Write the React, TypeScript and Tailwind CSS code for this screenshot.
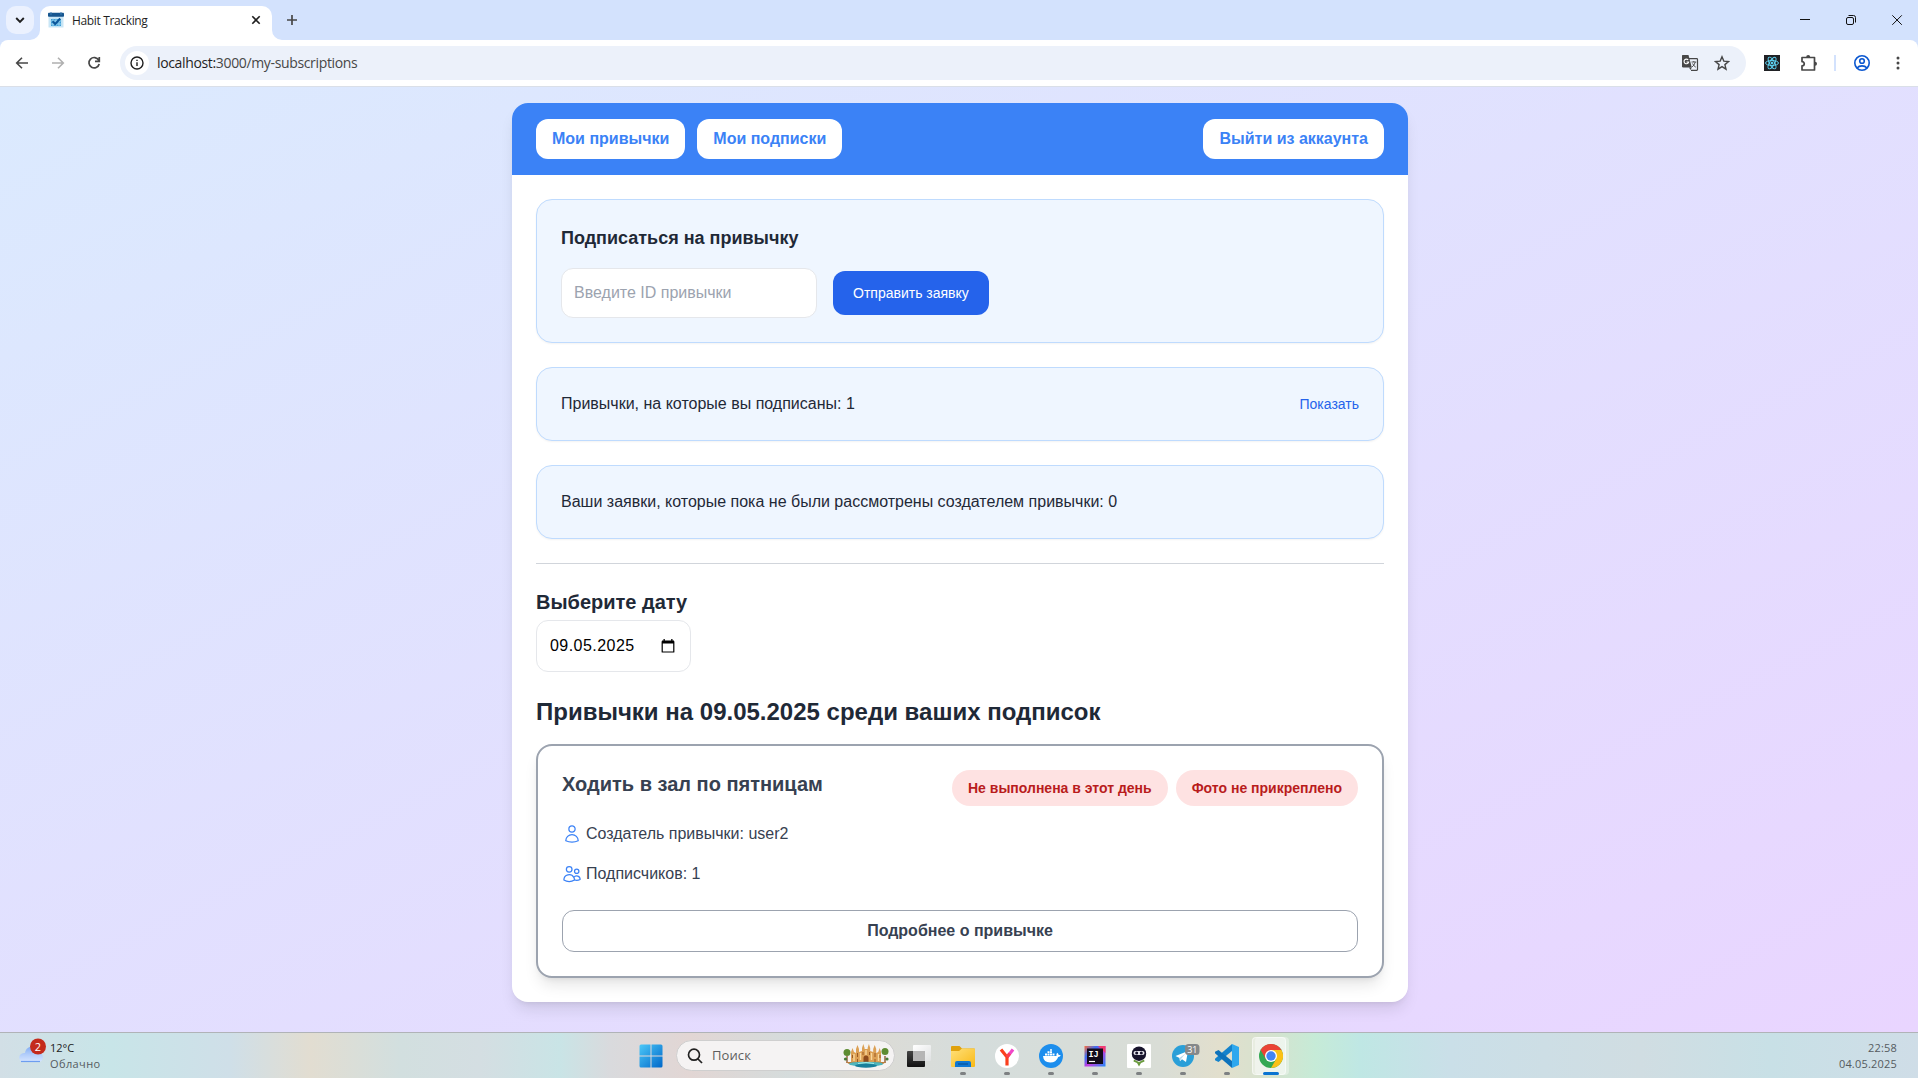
import React from "react";
import { HiOutlineUser, HiOutlineUsers } from "react-icons/hi2";

const UI = "font-['Open_Sans',sans-serif]";

function Favicon() {
  return (
    <svg width="16" height="16" viewBox="0 0 16 16" className="shrink-0">
      <rect x=".5" y="2" width="15" height="13.500" rx=".5" fill="#c9e6f6" />
      <path d="M3 7h10v7H3z" fill="#3f9fd8" />
      <path d="M5 6v9M8 6v9M11 6v9M2 9h12M2 12h12" stroke="#a9daf3" strokeWidth=".8" />
      <rect x="0" y=".8" width="16" height="4" rx=".8" fill="#17568f" />
      <path d="M3 0v3M13 0v3" stroke="#3d7cb4" strokeWidth="1" />
      <path d="M4.500 9.200l2.700 2.800 5-5.500" fill="none" stroke="#0b569a" strokeWidth="2" />
    </svg>
  );
}

function BrowserTabs() {
  return (
    <div className="flex h-10 items-end bg-[#d3e2fd]">
      <div className="flex h-10 w-10 items-center pl-[6px]">
        <div className="flex h-7 w-7 items-center justify-center rounded-[10px] bg-[#ebf1fe]">
          <svg width="10" height="8" viewBox="0 0 10 8" fill="none" stroke="#1f1f1f" strokeWidth="1.9"><path d="M1.2 2L5 5.8 8.8 2" /></svg>
        </div>
      </div>
      <div className="relative flex h-[34px] w-[232px] items-center rounded-t-[10px] bg-white px-2 pb-[6px]">
        <svg className="absolute bottom-0 -left-[10px]" width="10" height="10"><path d="M10 0v10H0A10 10 0 0 0 10 0z" fill="#fff" /></svg>
        <svg className="absolute -right-[10px] bottom-0" width="10" height="10"><path d="M0 0v10h10A10 10 0 0 1 0 0z" fill="#fff" /></svg>
        <Favicon />
        <span className="mt-px ml-2 flex-1 text-[12px] leading-4 tracking-[-0.35px] text-[#1f1f1f]">Habit Tracking</span>
        <svg width="16" height="16" viewBox="0 0 16 16" stroke="#1f1f1f" strokeWidth="1.6"><path d="M4.300 4.300l7.400 7.400M11.700 4.300l-7.400 7.400" /></svg>
      </div>
      <div className="flex h-10 flex-1 items-center pl-3">
        <svg width="16" height="16" viewBox="0 0 16 16" stroke="#474747" strokeWidth="1.700"><path d="M8 3v10M3 8h10" /></svg>
      </div>
      <div className="flex h-10 items-center">
        <svg width="46" height="40" viewBox="0 0 46 40"><path d="M17 19.500h10" stroke="#111" /></svg>
        <svg width="46" height="40" viewBox="0 0 46 40" fill="none" stroke="#111"><rect x="17.500" y="17.500" width="7" height="7" rx="1.500" /><path d="M19.500 15.500h5a2 2 0 0 1 2 2v5" /></svg>
        <svg width="43" height="40" viewBox="0 0 43 40" stroke="#111"><path d="M17.300 15.300l9.500 9.500M26.800 15.300l-9.500 9.500" /></svg>
      </div>
    </div>
  );
}

function TranslateIcon() {
  return (
    <svg width="18" height="18" viewBox="0 0 18 18">
      <path d="M7.500 4.700h8.200q.8 0 .8.800v10q0 .8-.8.800H10" fill="none" stroke="#474747" strokeWidth="1.200" />
      <path d="M1.500 1h6l3.300 12.500H2.300Q1 13.500 1 12.200V2q0-1 .5-1z" fill="#474747" />
      <path d="M8 13.500h2.800L9.500 16z" fill="#474747" />
      <path d="M7.200 6A2.300 2.300 0 1 0 7.600 8H5.500" fill="none" stroke="#fff" strokeWidth="1.100" />
      <path d="M10.500 8h4.800M12.800 7v1M14.300 8q-1 3.500-3.300 5M11.600 9.500q1 2.500 3.200 3.700" fill="none" stroke="#474747" strokeWidth=".9" />
    </svg>
  );
}

function Toolbar() {
  return (
    <div className="bg-[#d3e2fd]">
      <div className="flex h-[47px] items-center rounded-t-[8px] border-b border-[#dadfe8] bg-white">
        <div className="flex w-[120px] shrink-0 items-center gap-5 pl-[14px]">
          <svg width="16" height="16" viewBox="0 0 16 16" fill="none" stroke="#474747" strokeWidth="1.600"><path d="M14 8H3M8 2.700L2.700 8 8 13.300" /></svg>
          <svg width="16" height="16" viewBox="0 0 16 16" fill="none" stroke="#b0b0b0" strokeWidth="1.600"><path d="M2 8h11M8 2.700L13.300 8 8 13.300" /></svg>
          <svg width="16" height="16" viewBox="0 0 16 16" fill="none" stroke="#474747" strokeWidth="1.700"><path d="M12.700 5.200A5.200 5.200 0 1 0 13.200 9M13.300 2v4.300H9" /></svg>
        </div>
        <div className="flex h-[34px] flex-1 items-center rounded-full bg-[#ecf1fa] pr-4 pl-[5px]">
          <div className="flex h-6 w-6 items-center justify-center rounded-full bg-white">
            <svg width="16" height="16" viewBox="0 0 16 16" fill="none" stroke="#1f1f1f" strokeWidth="1.400"><circle cx="8" cy="8" r="6" /><path d="M8 7.300v3.700M8 4.700v1.400" /></svg>
          </div>
          <span className="ml-2 flex-1 text-[14px] leading-5 tracking-[-0.35px] text-[#474747]">
            <span className="text-[#1f1f1f]">localhost:</span>3000/my-subscriptions
          </span>
          <div className="flex items-center gap-[15px]">
            <TranslateIcon />
            <svg width="16" height="16" viewBox="0 0 16 16" fill="none" stroke="#474747" strokeWidth="1.400"><path d="M8 1.800l1.800 4.300 4.700.4-3.600 3.100 1.100 4.600L8 11.700l-4 2.500 1.100-4.600L1.500 6.500l4.700-.4z" /></svg>
          </div>
        </div>
        <div className="flex w-[172px] shrink-0 items-center pl-[18px]">
          <svg width="16" height="16" viewBox="0 0 16 16" fill="none" stroke="#61dafb" strokeWidth=".9">
            <rect width="16" height="16" fill="#202124" stroke="none" />
            <ellipse cx="8" cy="8" rx="6.500" ry="2.500" /><ellipse cx="8" cy="8" rx="6.500" ry="2.500" transform="rotate(60 8 8)" /><ellipse cx="8" cy="8" rx="6.500" ry="2.500" transform="rotate(120 8 8)" />
            <circle cx="8" cy="8" r="1" fill="#61dafb" />
          </svg>
          <svg className="ml-5" width="18" height="18" viewBox="0 0 18 18" fill="none" stroke="#474747" strokeWidth="1.700">
            <path d="M2 3.500h12.500v12.500H2v-4.200c3 0 3-4.200 0-4.200z" strokeLinejoin="round" /><path d="M6.200 3a2 2 0 0 1 4 0zM15 7.700a2 2 0 0 1 0 4z" fill="#474747" stroke="none" />
          </svg>
          <div className="ml-4 h-4 w-[2px] bg-[#d3e2fd]" />
          <svg className="ml-[17px]" width="18" height="18" viewBox="0 0 18 18" fill="none" stroke="#0b57d0" strokeWidth="1.600"><circle cx="9" cy="9" r="7.200" /><circle cx="9" cy="7" r="2.300" /><path d="M4 14c2.500-2.800 7.500-2.800 10 0" /></svg>
          <svg className="ml-[19px]" width="16" height="16" viewBox="0 0 16 16" fill="#474747"><circle cx="8" cy="3" r="1.500" /><circle cx="8" cy="8" r="1.500" /><circle cx="8" cy="13" r="1.500" /></svg>
        </div>
      </div>
    </div>
  );
}

function NavButton({ children }: { children: React.ReactNode }) {
  return <button className="rounded-xl bg-white px-4 py-2 font-semibold text-[#3b82f6]">{children}</button>;
}

function Panel({ children }: { children: React.ReactNode }) {
  return <section className="rounded-2xl border border-[#bfdbfe] bg-[#eff6ff] p-6 text-[#1f2937] shadow-[0_1px_2px_rgba(0,0,0,0.05)]">{children}</section>;
}

function Badge({ children }: { children: React.ReactNode }) {
  return <span className="rounded-full bg-[#fee2e2] px-4 py-2 text-sm font-semibold text-[#b91c1c]">{children}</span>;
}

function Page() {
  return (
    <main className="h-[945px] bg-[linear-gradient(to_bottom_right,#dbeafe,#e9d5ff)] pt-4 font-['Liberation_Sans',Arial,sans-serif] text-base">
      <div className="ml-[512px] w-[896px] rounded-2xl bg-white shadow-[0_10px_15px_-3px_rgba(0,0,0,0.1),0_4px_6px_-4px_rgba(0,0,0,0.1)]">
        <header className="flex items-center justify-between rounded-t-2xl bg-[#3b82f6] px-6 py-4">
          <nav className="flex gap-3">
            <NavButton>Мои привычки</NavButton>
            <NavButton>Мои подписки</NavButton>
          </nav>
          <NavButton>Выйти из аккаунта</NavButton>
        </header>
        <div className="flex flex-col gap-6 p-6">
          <Panel>
            <h3 className="mb-4 text-lg leading-7 font-semibold">Подписаться на привычку</h3>
            <div className="flex items-center gap-4">
              <input placeholder="Введите ID привычки" className="h-[50px] w-64 rounded-xl border border-[#e5e7eb] bg-white p-3 placeholder:text-[#9ca3af]" />
              <button className="rounded-xl bg-[#2563eb] px-5 py-3 text-sm text-white">Отправить заявку</button>
            </div>
          </Panel>
          <Panel>
            <div className="flex items-center justify-between">
              <p>Привычки, на которые вы подписаны: 1</p>
              <button className="text-sm text-[#2563eb]">Показать</button>
            </div>
          </Panel>
          <Panel>
            <p>Ваши заявки, которые пока не были рассмотрены создателем привычки: 0</p>
          </Panel>
          <hr className="border-t border-[#d1d5db]" />
          <div>
            <h3 className="mb-1 text-xl leading-7 font-semibold text-[#1f2937]">Выберите дату</h3>
            <div className="flex h-[52px] w-[155px] items-center justify-between rounded-xl border border-[#e5e7eb] pr-[15px] pl-[13px] text-black">
              <span className="tracking-[0.45px]">09.05.2025</span>
              <svg width="14" height="14" viewBox="0 0 14 14"><path d="M1.200 2.500h11.600v10.500H1.200z" fill="none" stroke="#000" strokeWidth="1.200" strokeLinejoin="round" /><path d="M1 1.500h12v3H1zM2.500 0h1.300v2H2.500zM10.200 0h1.300v2h-1.300z" /></svg>
            </div>
          </div>
          <div>
            <h2 className="mb-4 text-2xl leading-8 font-bold text-[#1f2937]">Привычки на 09.05.2025 среди ваших подписок</h2>
            <article className="rounded-2xl border-2 border-[#9ca3af] bg-white p-6 text-[#374151] shadow-[0_10px_15px_-3px_rgba(0,0,0,0.1),0_4px_6px_-4px_rgba(0,0,0,0.1)]">
              <div className="flex items-start justify-between">
                <h3 className="text-xl leading-7 font-semibold">Ходить в зал по пятницам</h3>
                <div className="flex gap-2">
                  <Badge>Не выполнена в этот день</Badge>
                  <Badge>Фото не прикреплено</Badge>
                </div>
              </div>
              <p className="mt-4 flex items-center gap-1"><HiOutlineUser className="h-5 w-5 text-[#3b82f6]" />Создатель привычки: user2</p>
              <p className="mt-4 flex items-center gap-1"><HiOutlineUsers className="h-5 w-5 text-[#3b82f6]" />Подписчиков: 1</p>
              <button className="mt-6 w-full rounded-xl border border-[#9ca3af] py-2 font-semibold">Подробнее о привычке</button>
            </article>
          </div>
        </div>
      </div>
    </main>
  );
}

function WeatherIcon() {
  return (
    <svg width="32" height="28" viewBox="0 0 32 28">
      <defs>
        <linearGradient id="cloud" gradientUnits="userSpaceOnUse" x1="0" y1="8" x2="0" y2="24">
          <stop offset="0" stopColor="#7fa9f2" />
          <stop offset=".55" stopColor="#b4cffb" />
          <stop offset="1" stopColor="#d6e5ff" />
        </linearGradient>
      </defs>
      <path d="M7 24C0 24 1 14 8 15C9 7 20 6 21 14C28 15 27 24 22 24Z" fill="url(#cloud)" />
      <path d="M4 23.500h19" stroke="#6d9df0" strokeWidth="1.200" />
      <circle cx="21" cy="8.500" r="8" fill="#c42b1c" />
      <text x="21" y="12.500" textAnchor="middle" fontFamily="Open Sans" fontSize="11" fill="#fff">2</text>
    </svg>
  );
}

function PalaceArt() {
  return (
    <svg width="48" height="24" viewBox="0 0 48 24">
      <path d="M5 12v7M43 12v7" stroke="#875025" strokeWidth="1.300" />
      <circle cx="5" cy="8.500" r="3.500" fill="#5e8c32" /><circle cx="43" cy="7.500" r="3.500" fill="#5e8c32" />
      <circle cx="3.500" cy="15" r="1.600" fill="#477a36" /><circle cx="45" cy="15" r="1.600" fill="#477a36" />
      <path d="M9 19V8l1.500-4L12 8l2 1V5l1.500-4L17 5v3l3-1V4l1.300-4 1.300 4v1h3V4l1.300-4L28.200 4v3l3 1V5l1.500-4L34.200 5v4l2-1 1.500-4L39 8v11z" fill="#dca055" />
      <path d="M12 10v7M18.500 9v7M24 6v5M29.500 9v7M36.500 10v7" stroke="#f8d79c" strokeWidth="1.400" />
      <path d="M21.500 18v-4a2.500 2.500 0 0 1 5 0v4z" fill="#8d4b1d" />
      <path d="M10.500 11v3M15.500 9v4M21 8v3M27.500 8v3M33 9v4M38 11v3M15.500 15v3M33 15v3" stroke="#9a5a26" strokeWidth="1" />
      <path d="M4 18h40l-3 2H7z" fill="#bd7d3a" />
      <ellipse cx="24" cy="20" rx="17" ry="2.300" fill="#4fb5bd" /><ellipse cx="24" cy="21.700" rx="11" ry="2" fill="#187f9b" />
      <path d="M16 19.500q8-2 16 0" stroke="#a5edea" fill="none" />
    </svg>
  );
}

function StartIcon() {
  return (
    <svg width="24" height="24" viewBox="0 0 24 24">
      <defs><linearGradient id="win" x1="0" y1="0" x2="1" y2="1"><stop offset="0" stopColor="#4cc8f8" /><stop offset="1" stopColor="#0067c9" /></linearGradient></defs>
      <path d="M2 .5h9.500v11H.500V2Q.5.500 2 .5zM12.500.5H22q1.500 0 1.500 1.500v9.500h-11zM.5 12.500h11v11H2q-1.500 0-1.500-1.500zM12.500 12.500h11V22q0 1.500-1.500 1.500h-9.500z" fill="url(#win)" />
    </svg>
  );
}

function TaskViewIcon() {
  return (
    <svg width="24" height="24" viewBox="0 0 24 24">
      <defs>
        <linearGradient id="tvd" x1="0" y1="0" x2="0" y2="1"><stop offset="0" stopColor="#444" /><stop offset="1" stopColor="#111" /></linearGradient>
        <linearGradient id="tvl" x1="0" y1="0" x2="1" y2="1"><stop offset="0" stopColor="#fff" /><stop offset="1" stopColor="#dfe1e2" /></linearGradient>
      </defs>
      <rect x="0" y="7" width="18" height="16" rx="1" fill="url(#tvd)" /><rect x="6" y="1" width="18" height="16" rx="1" fill="url(#tvl)" /><path d="M6 7h12v10H6z" fill="#b5b5b5" />
    </svg>
  );
}

function FolderIcon() {
  return (
    <svg width="24" height="24" viewBox="0 0 24 24">
      <defs><linearGradient id="fold" x1="0" y1="0" x2="1" y2="1"><stop offset="0" stopColor="#ffe07a" /><stop offset="1" stopColor="#f9b916" /></linearGradient></defs>
      <path d="M0 3q0-1 1-1h7.500l2.500 2.500h12q1 0 1 1V12H0z" fill="#e0a10d" />
      <path d="M0 7h8l3-2.500h12q1 0 1 1V22q0 1-1 1H1q-1 0-1-1z" fill="url(#fold)" />
      <path d="M4 23v-4q0-2 2-2h12q2 0 2 2v4z" fill="#0f78d4" /><path d="M7 20h10" stroke="#084b8a" />
    </svg>
  );
}

function YandexIcon() {
  return (
    <svg width="24" height="24" viewBox="0 0 24 24">
      <circle cx="12" cy="12" r="12" fill="#fff" />
      <path d="M12.200 13L18 5.500" stroke="#f046c8" strokeWidth="3.200" />
      <path d="M6 5.500L12 13v8.500" fill="none" stroke="#fb3f1d" strokeWidth="3.200" />
      <path d="M12 13l2.700-3.400" stroke="#fb3f4d" strokeWidth="3.200" />
    </svg>
  );
}

function DockerIcon() {
  return (
    <svg width="24" height="24" viewBox="0 0 24 24">
      <circle cx="12" cy="12" r="12" fill="#1d8eed" />
      <path d="M4 12h13.500q-.5-2 .7-3.300 1.300.8 1.500 2.300 1.300-.3 2.100.2-.7 1.600-2.600 1.700-2 5.600-8 5.600Q4.500 18.500 4 12z" fill="#fff" />
      <path d="M6 9.500h2v2H6zM8.500 9.500h2v2h-2zM11 9.500h2v2h-2zM13.500 9.500h2v2h-2zM8.500 7.300h2v1.700h-2zM11 7.300h2v1.700h-2zM11 5.300h2v1.500h-2z" fill="#fff" />
    </svg>
  );
}

function IdeaIcon() {
  return (
    <svg width="22" height="22" viewBox="0 0 22 22">
      <defs><linearGradient id="ij" x1="0" y1="0" x2="1" y2="1"><stop offset="0" stopColor="#fc6b3a" /><stop offset=".3" stopColor="#3a6df5" /><stop offset=".55" stopColor="#c73be0" /><stop offset="1" stopColor="#1f8dfa" /></linearGradient></defs>
      <rect x=".5" y="1" width="21" height="20.500" fill="url(#ij)" /><path d="M14 1h7.500v7z" fill="#f03c72" />
      <rect x="3" y="3.500" width="16" height="15.500" fill="#130b1a" />
      <text x="4.500" y="11.500" fontFamily="Liberation Mono" fontWeight="700" fontSize="8.500" fill="#fff">IJ</text>
      <path d="M5 16.500h6" stroke="#fff" strokeWidth="1.200" />
    </svg>
  );
}

function NinjaIcon() {
  return (
    <svg width="24" height="24" viewBox="0 0 24 24">
      <rect width="24" height="24" rx="1" fill="#fff" />
      <path d="M7 15.500l5 2.500 5-2.500.5 2-3.500 1.500L12 22.500 10 19l-3.500-1.500z" fill="#6b9b3f" />
      <ellipse cx="12" cy="9.700" rx="7.200" ry="7.200" fill="#17142c" />
      <rect x="6.500" y="7" width="11" height="4" rx="2" fill="#e8e8ef" /><circle cx="9.700" cy="9" r="1.500" fill="#17142c" /><circle cx="14.300" cy="9" r="1.500" fill="#17142c" />
    </svg>
  );
}

function TelegramIcon() {
  return (
    <svg width="30" height="24" viewBox="0 0 30 24" className="ml-1.5">
      <circle cx="12" cy="12" r="11" fill="#2a9fd8" />
      <path d="M4.500 12L17 7l-2 11-4-2.800-2 2-.5-3.200z" fill="#fff" /><path d="M8.500 14l6-4.500-4.500 5.500-1 2.200z" fill="#b9d9ec" />
      <rect x="14" y="0" width="14.500" height="11" rx="3.500" fill="#85888a" />
      <text x="21.300" y="9" textAnchor="middle" fontFamily="Open Sans" fontSize="9" fill="#fff">31</text>
    </svg>
  );
}

function CodeIcon() {
  return (
    <svg width="24" height="24" viewBox="0 0 24 24">
      <path d="M17 0v7L3.500 18 0 16.300v-1.500z" fill="#1583cc" />
      <path d="M17 24v-7L3.500 6 0 7.700v1.500z" fill="#0d72bb" />
      <path d="M17 0l7 3v18l-7 3z" fill="#2ea8ee" />
    </svg>
  );
}

function ChromeIcon() {
  return (
    <svg width="24" height="24" viewBox="0 0 24 24">
      <circle cx="12" cy="12" r="12" fill="#34a853" />
      <path d="M1.600 6A12 12 0 0 1 22.400 6H12l-5.200 9z" fill="#ea4335" />
      <path d="M22.400 6A12 12 0 0 1 12 24l5.200-9L12 6z" fill="#fbc116" />
      <circle cx="12" cy="12" r="6" fill="#fff" /><circle cx="12" cy="12" r="4.700" fill="#4285f4" />
    </svg>
  );
}

function TaskbarApp({ children, active }: { children: React.ReactNode; active?: boolean }) {
  return (
    <div className="flex h-[45px] w-11 flex-col items-center">
      <div className="flex h-[39px] items-center pt-[7px]">{children}</div>
      <div className={active ? "h-[3px] w-4 rounded-full bg-[#0a74d1]" : "h-[3px] w-[6px] rounded-full bg-[#7d8082]"} />
    </div>
  );
}

function Taskbar() {
  return (
    <footer className="grid h-[46px] grid-cols-[628px_1fr_300px] border-t border-[#b0b3b7] bg-[linear-gradient(90deg,#d2dfe6_0px,#c8e5e8_110px,#cfdfe8_230px,#e2ddd1_310px,#d2dfdf_400px,#d4dee2_480px,#c9e4e6_560px,#d9dadd_610px,#e2d6d4_690px,#d5dcdc_790px,#dddbd5_860px,#d5dddc_980px,#d9ddd6_1160px,#e2dfcd_1220px,#d4e3cf_1275px,#c6ebd7_1315px,#bfe7e4_1360px,#cadfe8_1450px,#d0dde2_1640px,#c8e0e6_1770px,#cfdde7_1918px)]">
      <div className="flex items-center pl-[17px]">
        <div className="-mt-[7px]"><WeatherIcon /></div>
        <div className="ml-px text-[11px] leading-4">
          <div className="text-[#1b1b1b]">12°C</div>
          <div className="tracking-[0.4px] text-[#555b60]">Облачно</div>
        </div>
      </div>
      <div className="flex">
        <div className="flex h-[45px] w-11 items-center justify-center pt-px pl-px"><StartIcon /></div>
        <div className="mt-[7px] mr-[2px] ml-1 flex h-[31px] w-[219px] items-center rounded-full border border-[#cfcfcf] bg-[#f5f3f3] pr-1 pl-[10px]">
          <svg width="16" height="16" viewBox="0 0 16 16" fill="none" stroke="#222" strokeWidth="1.700"><circle cx="7" cy="6.700" r="5.500" /><path d="M11 11l4 4" /></svg>
          <span className="ml-[9px] flex-1 text-[13px] tracking-[0.1px] text-[#5e5e5e]">Поиск</span>
          <PalaceArt />
        </div>
        <div className="flex h-[45px] w-11 items-center justify-center"><TaskViewIcon /></div>
        <TaskbarApp><FolderIcon /></TaskbarApp>
        <TaskbarApp><YandexIcon /></TaskbarApp>
        <TaskbarApp><DockerIcon /></TaskbarApp>
        <TaskbarApp><IdeaIcon /></TaskbarApp>
        <TaskbarApp><NinjaIcon /></TaskbarApp>
        <TaskbarApp><TelegramIcon /></TaskbarApp>
        <TaskbarApp><CodeIcon /></TaskbarApp>
        <div className="relative">
          <div className="absolute top-1 left-[6px] h-[38px] w-[34px] rounded-[4px] bg-white/35" />
          <div className="absolute top-1 left-[3px] h-[38px] w-[34px] rounded-[4px] border border-white/50 bg-white/40" />
          <div className="relative"><TaskbarApp active><ChromeIcon /></TaskbarApp></div>
        </div>
      </div>
      <div className="pt-[7px] pr-[21px] text-right text-[11px] leading-4 tracking-[0.2px] text-[#555b60]">
        <div>22:58</div>
        <div>04.05.2025</div>
      </div>
    </footer>
  );
}

export default function App() {
  return (
    <div className={`h-[1078px] w-[1918px] overflow-hidden ${UI}`}>
      <BrowserTabs />
      <Toolbar />
      <Page />
      <Taskbar />
    </div>
  );
}
